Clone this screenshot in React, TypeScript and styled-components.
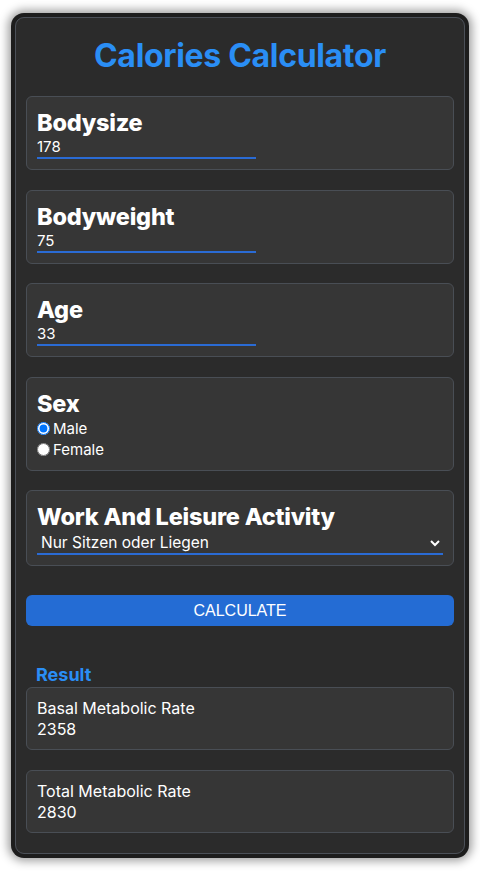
import { useState } from 'react'
import styled, { createGlobalStyle } from 'styled-components'

const GlobalStyle = createGlobalStyle`
  html, body {
    margin: 0;
    padding: 0;
    background: #ffffff;
  }

  body {
    font-family: Inter, "Noto Sans", sans-serif;
    color: #ffffff;
  }
`

const Page = styled.div`
  padding: 17px 15px 19px;
`

const Card = styled.main`
  box-sizing: border-box;
  width: 450px;
  background-color: #2b2b2b;
  border: 1px solid #4b5058;
  border-radius: 9px;
  padding: 0 10px 20px;
  box-shadow: 0 0 0 4px #1d1d1d, 0 0 10px 7px rgba(0, 0, 0, 0.38);
  display: flex;
  flex-direction: column;
`

const Title = styled.h1`
  margin: 19px 0 21px;
  text-align: center;
  font-size: 32px;
  line-height: 38px;
  font-weight: 700;
  letter-spacing: -0.01em;
  color: #2a8ef5;
`

const Fields = styled.div`
  display: flex;
  flex-direction: column;
  gap: 19.6px;
`

const Field = styled.div`
  background-color: #363636;
  border: 1px solid #494e55;
  border-radius: 6px;
  padding: 12px 10px 10px;
  display: flex;
  flex-direction: column;
  align-items: flex-start;
`

const Label = styled.label`
  font-size: 23.5px;
  line-height: 28px;
  font-weight: 800;
  letter-spacing: -0.01em;
`

const NumberInput = styled.input`
  box-sizing: border-box;
  width: 219px;
  margin: 0;
  padding: 1px 0;
  border: none;
  border-bottom: 2px solid #2a6bd4;
  background: transparent;
  color: #ffffff;
  font-family: inherit;
  font-size: 15px;
  line-height: 18px;
  outline: none;
`

const RadioRow = styled.label`
  display: flex;
  align-items: center;
  height: 21px;
  font-size: 15px;

  input {
    width: 13px;
    height: 13px;
    margin: 0 3px 0 0;
  }
`

const Select = styled.select`
  width: 100%;
  height: 24px;
  margin: 0;
  border: none;
  border-bottom: 2px solid #2a6bd4;
  border-radius: 0;
  background: transparent;
  color: #ffffff;
  font-family: inherit;
  font-size: 15.5px;
  outline: none;

  option {
    color: #000000;
  }
`

const Button = styled.button`
  margin: 29px 0 0;
  height: 31px;
  border: none;
  border-radius: 6px;
  background-color: #246cd4;
  color: #ffffff;
  font-family: "Liberation Sans", Arial, sans-serif;
  font-size: 16px;
  cursor: pointer;
`

const ResultTitle = styled.h2`
  margin: 37px 0 1px 10px;
  font-size: 18px;
  line-height: 23px;
  font-weight: 700;
  color: #2a8ef5;
`

const Results = styled.div`
  display: flex;
  flex-direction: column;
  gap: 20px;
`

const ResultBox = styled.div`
  background-color: #363636;
  border: 1px solid #494e55;
  border-radius: 6px;
  padding: 10px 10px 9px;
  font-size: 16px;
  line-height: 21px;
`

const activities = [
  { label: 'Nur Sitzen oder Liegen', factor: 1.2 },
  { label: 'Sitzend, kaum Bewegung', factor: 1.45 },
  { label: 'Sitzend, gehend und stehend', factor: 1.65 },
  { label: 'Hauptsächlich stehend und gehend', factor: 1.85 },
  { label: 'Körperlich anstrengend', factor: 2.2 },
]

const App = () => {
  const [size, setSize] = useState('178')
  const [weight, setWeight] = useState('75')
  const [age, setAge] = useState('33')
  const [sex, setSex] = useState('male')
  const [activity, setActivity] = useState(0)
  const [result, setResult] = useState({ basal: 2358, total: 2830 })

  const calculate = () => {
    const base = 10 * +weight + 6.25 * +size - 5 * +age
    const basal = Math.round(sex === 'male' ? base + 5 : base - 161)
    setResult({ basal, total: Math.round(basal * activities[activity].factor) })
  }

  return (
    <Page>
      <GlobalStyle />
      <Card>
        <Title>Calories Calculator</Title>
        <Fields>
          <Field>
            <Label htmlFor="size">Bodysize</Label>
            <NumberInput id="size" value={size} onChange={(e) => setSize(e.target.value)} />
          </Field>
          <Field>
            <Label htmlFor="weight">Bodyweight</Label>
            <NumberInput id="weight" value={weight} onChange={(e) => setWeight(e.target.value)} />
          </Field>
          <Field>
            <Label htmlFor="age">Age</Label>
            <NumberInput id="age" value={age} onChange={(e) => setAge(e.target.value)} />
          </Field>
          <Field>
            <Label>Sex</Label>
            <RadioRow>
              <input type="radio" name="sex" checked={sex === 'male'} onChange={() => setSex('male')} />
              Male
            </RadioRow>
            <RadioRow>
              <input type="radio" name="sex" checked={sex === 'female'} onChange={() => setSex('female')} />
              Female
            </RadioRow>
          </Field>
          <Field>
            <Label htmlFor="activity">Work And Leisure Activity</Label>
            <Select id="activity" value={activity} onChange={(e) => setActivity(+e.target.value)}>
              {activities.map((a, i) => (
                <option key={a.label} value={i}>
                  {a.label}
                </option>
              ))}
            </Select>
          </Field>
        </Fields>
        <Button onClick={calculate}>CALCULATE</Button>
        <ResultTitle>Result</ResultTitle>
        <Results>
          <ResultBox>
            Basal Metabolic Rate
            <br />
            {result.basal}
          </ResultBox>
          <ResultBox>
            Total Metabolic Rate
            <br />
            {result.total}
          </ResultBox>
        </Results>
      </Card>
    </Page>
  )
}

export default App
